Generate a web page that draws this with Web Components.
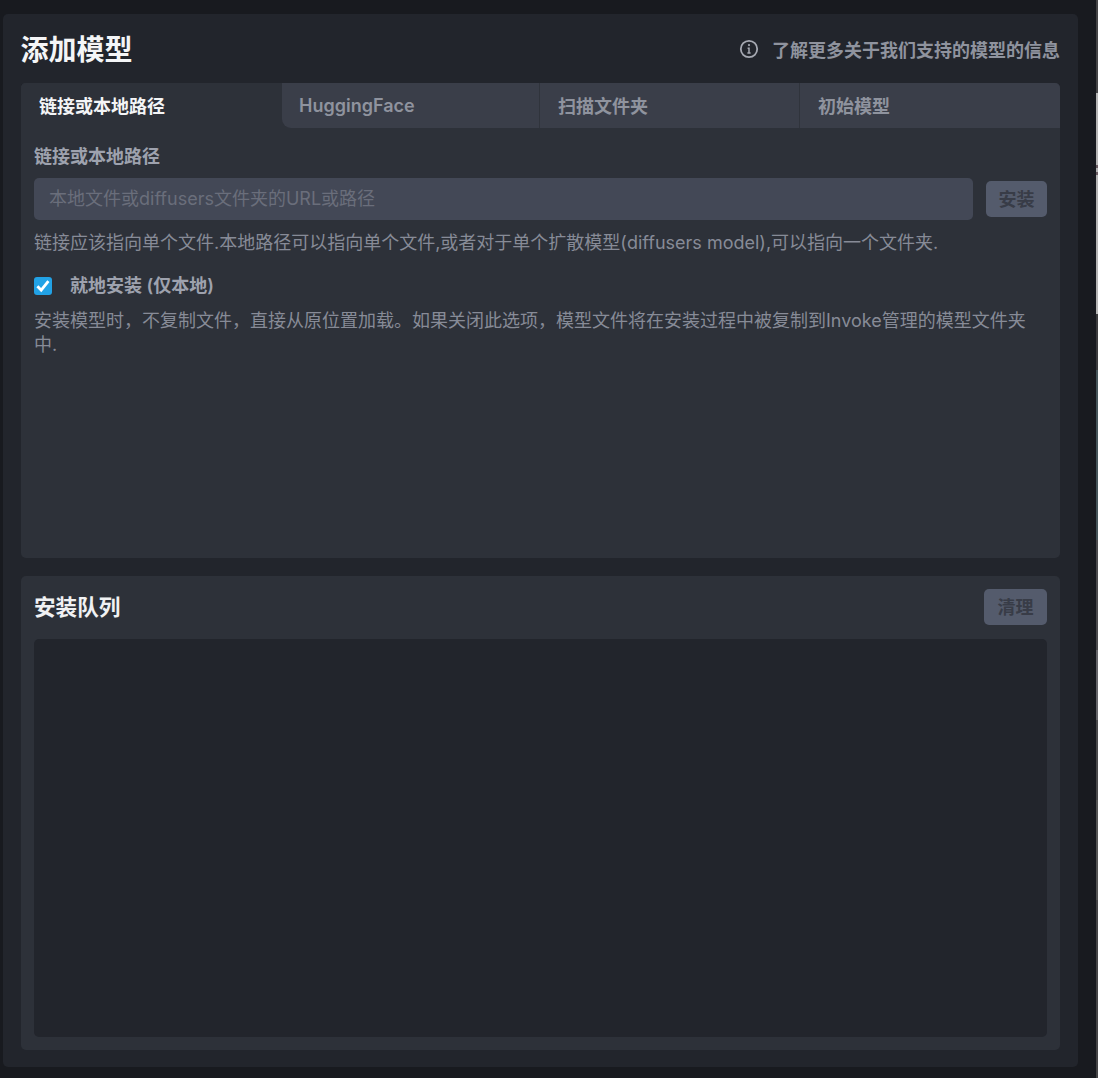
<!DOCTYPE html>
<html lang="zh"><head><meta charset="utf-8">
<style>
html,body{margin:0;height:100%;background:#181a1f;overflow:hidden}
body{font-family:Inter,"Noto Sans CJK SC",sans-serif;font-size:18px;color:#fff}
</style></head><body>
<model-page></model-page>
<template id="t-page"><style>
:host{display:flex;position:relative;height:1078px;width:1098px;box-sizing:border-box;padding:14px 0 11px 3px}
.panel{width:1075px;box-sizing:border-box;padding:0 18px 17px;background:#22252c;border-radius:5px;display:flex;flex-direction:column;gap:18px}
header{display:flex;justify-content:space-between;align-items:center;height:51px;margin-top:18px;margin-bottom:-18px;padding-bottom:16px;box-sizing:border-box}
h1{margin:0 0 0 -.5px;font-size:28px;font-weight:700;line-height:36px;color:#f4f5f7}
.link{display:flex;align-items:center;gap:13px;font-weight:600;color:#8f939e;margin-top:-2px}
svg{display:block}
.box{background:#2d3139;border-radius:5px;display:flex;flex-direction:column;min-height:0}
.install{height:475px}
.queue{height:474px;padding:13px;box-sizing:border-box;gap:14px}
.tabs{display:flex;height:45px;flex:none;background:#2d3139;border-radius:5px 5px 0 0}
.body{padding:16px 13px 0;display:flex;flex-direction:column}
.row{display:flex;align-items:center;gap:13px;margin-top:8px}
.label{font-weight:600;color:#9ea2ae;line-height:26px}
.input{flex:1;height:42px;border-radius:5px;background:#434856;color:#6a6e7b;display:flex;align-items:center;padding:0 15px;line-height:24px}
.help{color:#878b97;line-height:24px;margin-top:11px}
.check{display:flex;align-items:center;gap:18px;margin-top:18px;height:26px}
.cb{width:18px;height:18px;border-radius:3px;background:#22a2e6;flex:none;margin-top:-1px}
.qhead{display:flex;justify-content:space-between;align-items:center;flex:none}
h2{margin:0;font-size:21.6px;line-height:32px;font-weight:700;color:#f0f1f3}
.list{flex:1;background:#22252c;border-radius:5px}
.edge{position:absolute;right:0;top:0;width:2px;height:1078px;background:linear-gradient(#454547 0 93px,#b5b5b5 93px 165px,#6b5d63 165px 168px,#b5b5b5 168px 172px,#6b5d63 172px 175px,#b5b5b5 175px 314px,#3c3c3e 314px 370px,#46555a 370px 540px,#4c4c4e 540px 650px,#66666a 650px 720px,#4a4a4c 720px 800px,#555 800px 900px,#454547 900px)}
</style>
<div class="panel">
<header><h1>添加模型</h1>
<div class="link"><svg width="20" height="20" viewBox="0 0 20 20" fill="none" stroke="#a6a9b2" stroke-width="1.8"><circle cx="10" cy="10" r="8.2"/><path d="M8.6 9.2H10V14M8.4 14h3.2" stroke-width="1.5"/><circle cx="10" cy="6.1" r="1.1" fill="#a6a9b2" stroke="none"/></svg><span>了解更多关于我们支持的模型的信息</span></div></header>
<section class="box install">
<div class="tabs">
<tab-item selected first cjk w="261">链接或本地路径</tab-item>
<tab-item w="258" round>HuggingFace</tab-item>
<tab-item cjk w="260">扫描文件夹</tab-item>
<tab-item cjk w="260" last>初始模型</tab-item>
</div>
<div class="body">
<div class="label">链接或本地路径</div>
<div class="row"><div class="input">本地文件或diffusers文件夹的URL或路径</div><dim-button>安装</dim-button></div>
<div class="help">链接应该指向单个文件.本地路径可以指向单个文件,或者对于单个扩散模型(diffusers model),可以指向一个文件夹.</div>
<div class="check"><div class="cb"><svg width="18" height="18" viewBox="0 0 18 18" fill="none" stroke="#fff" stroke-width="2.8"><path d="M3.4 9.2l3.8 4 7.2-9"/></svg></div><div class="label">就地安装 (仅本地)</div></div>
<div class="help" style="margin-top:10px">安装模型时，不复制文件，直接从原位置加载。如果关闭此选项，模型文件将在安装过程中被复制到Invoke管理的模型文件夹中.</div>
</div>
</section>
<section class="box queue">
<div class="qhead"><h2>安装队列</h2><dim-button wide>清理</dim-button></div>
<div class="list"></div>
</section>
</div>
<div class="edge"></div>
</template>
<template id="t-tab"><style>
:host{display:flex;align-items:center;box-sizing:border-box;height:45px;background:#3a3e49;color:#8f939e;font-weight:600;padding-left:18px;border-right:1px solid #30343c}
:host([selected]){background:#2d3139;color:#f4f5f7;border-right:0;border-top-left-radius:5px}
:host([round]){border-bottom-left-radius:9px;padding-left:17px}
:host([last]){border-right:0;border-top-right-radius:5px}
:host([cjk]){padding-bottom:2px}
</style><slot></slot></template>
<template id="t-btn"><style>
:host{display:flex;align-items:center;justify-content:center;width:61px;height:36px;padding-bottom:2px;box-sizing:border-box;flex:none;border-radius:5px;background:#545b6c;color:#383c47;font-weight:600}
:host([wide]){width:63px}
</style><slot></slot></template>
<script>
function def(name,id,init){customElements.define(name,class extends HTMLElement{
 constructor(){super();this.attachShadow({mode:'open'}).appendChild(document.getElementById(id).content.cloneNode(true))}
 connectedCallback(){if(init)init(this)}
})}
def('dim-button','t-btn');
def('tab-item','t-tab',el=>{el.style.width=el.getAttribute('w')+'px'});
def('model-page','t-page');
</script>
</body></html>
